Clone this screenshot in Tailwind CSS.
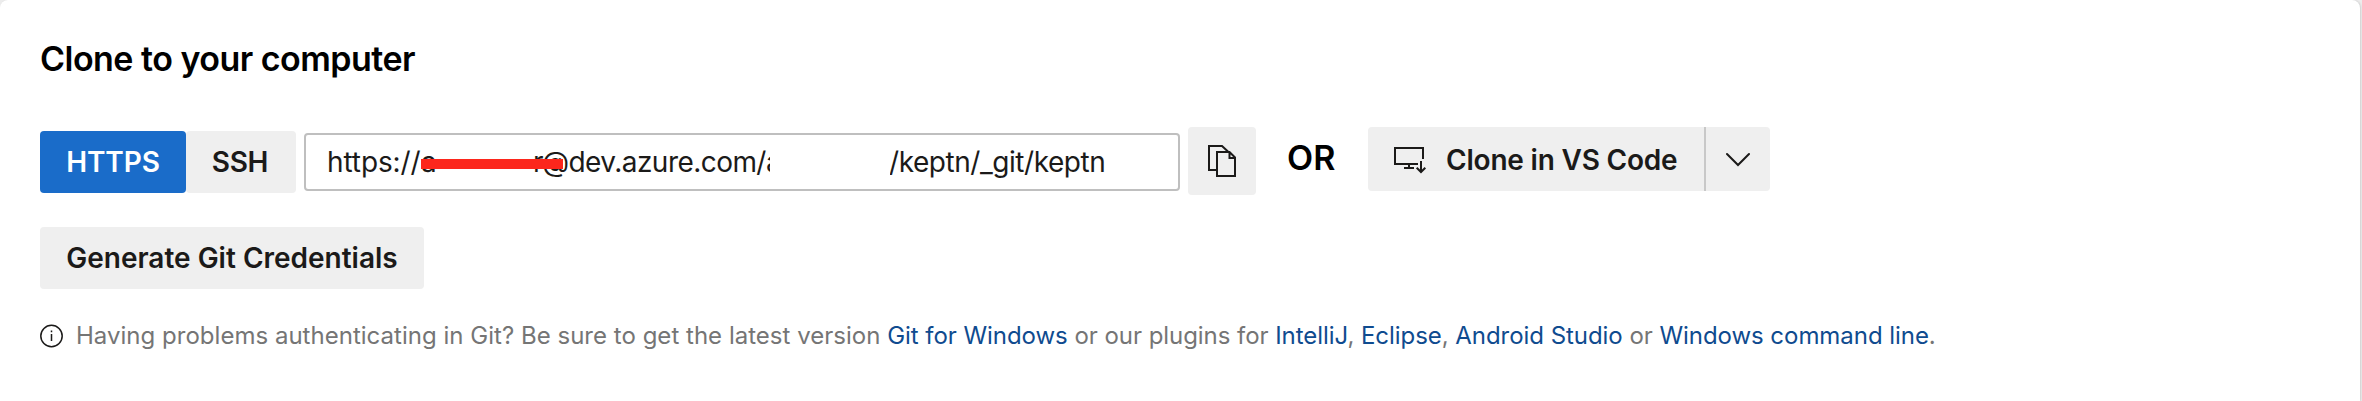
<!DOCTYPE html>
<html lang="en"><head><meta charset="utf-8"><title>Clone to your computer</title>
<script src="https://cdn.jsdelivr.net/npm/@tailwindcss/browser@4"></script></head>
<body class="h-[401px] overflow-hidden bg-[#ececec] font-['Inter',sans-serif] text-[28px] leading-[36px] text-[#1b1a19]">
<main class="flex h-[401px] w-[2360px] flex-col items-start overflow-hidden whitespace-nowrap rounded-t-[8px] bg-white pl-10 shadow-[1px_0_2px_rgba(0,0,0,0.12)]">
  <h1 class="mt-[37px] h-[44px] text-[34px] leading-[44px] font-semibold tracking-[-0.52px] text-black">Clone to your computer</h1>
  <div class="mt-[46px] flex h-[68px] items-start">
    <div class="mt-1 flex font-semibold">
      <button class="h-[62px] w-[146px] rounded-[4px] bg-[#1a6cc9] tracking-[-0.1px] text-white">HTTPS</button>
      <button class="h-[62px] w-[110px] rounded-[4px] bg-[#efefef] pr-[2px] tracking-[-0.3px]">SSH</button>
    </div>
    <div class="mt-[6px] ml-2 flex h-[58px] w-[876px] items-center rounded-[4px] border-2 border-[#bfbfbf] bg-white pl-[21px] tracking-[-0.45px]">
      <div class="relative flex">
        <span class="w-[94px] tracking-[-0.1px]">https://</span>
        <span class="w-[112px]">a</span>
        <span class="w-[9px]">r</span>
        <span class="w-[228px] overflow-hidden tracking-[-0.55px]">@dev.azure.com/a</span>
        <span class="ml-[120px] flex w-[230px] overflow-hidden"><span class="-ml-[1px]">/keptn/_git/keptn</span></span>
        <span class="absolute top-[15px] left-[94px] h-[10px] w-[142px] bg-[#fc261c]"></span>
      </div>
    </div>
    <button class="ml-2 flex h-[68px] w-[68px] items-center justify-center rounded-[4px] bg-[#efefef]" aria-label="Copy">
      <svg class="h-11 w-11" viewBox="0 0 44 44" fill="none" stroke="#1b1a19" stroke-width="2"><path d="M16 31H9V7H22L28.5 13M17 13H29.5L35 18.5V37H17ZM29.5 13V19H35"/></svg>
    </button>
    <span class="ml-[31px] mt-[9px] w-[81px] text-[34px] leading-[44px] font-semibold text-black">OR</span>
    <button class="flex h-[64px] w-[336px] items-center rounded-l-[4px] bg-[#efefef] pl-[18px] font-semibold">
      <svg class="h-11 w-11" viewBox="0 0 44 44" fill="none" stroke="#1b1a19" stroke-width="2"><path d="M37 22V11H9V27H32M23 27V31M18 31H28M35 24V35M30.7 30.7L35 35L39.3 30.7"/></svg>
      <span class="ml-[16px] pt-[2px] tracking-[-0.2px]">Clone in VS Code</span>
    </button>
    <button class="flex h-[64px] w-[66px] items-center justify-center rounded-r-[4px] border-l-2 border-[#c8c8c8] bg-[#efefef]" aria-label="More options">
      <svg class="h-[24px] w-[24px]" viewBox="0 0 24 24" fill="none" stroke="#1b1a19" stroke-width="2" stroke-linecap="round"><path d="M1 7L12 18L23 7"/></svg>
    </button>
  </div>
  <button class="mt-8 h-[62px] w-[384px] rounded-[4px] bg-[#efefef] font-semibold">Generate Git Credentials</button>
  <div class="mt-[31px] flex h-[32px] items-center text-[24px] leading-[32px] text-[#757575]">
    <svg class="h-6 w-[23px]" viewBox="0 0 23 24" fill="none" stroke="#1b1a19" stroke-width="1.5"><circle cx="11.5" cy="12" r="10.7"/><path d="M11.5 10V17M11.5 6.4V8.2"/></svg>
    <p class="ml-[13px]"><span class="tracking-[0.02px]">Having problems authenticating in Git? Be sure to get the latest version </span><span class="tracking-[-0.05px]"><a class="text-[#0f4b8f]">Git for Windows</a> or our plugins for <a class="text-[#0f4b8f]">IntelliJ</a>, <a class="text-[#0f4b8f]">Eclipse</a>, <a class="text-[#0f4b8f]">Android Studio</a> or <a class="text-[#0f4b8f]">Windows command line</a>.</span></p>
  </div>
</main>
</body></html>
